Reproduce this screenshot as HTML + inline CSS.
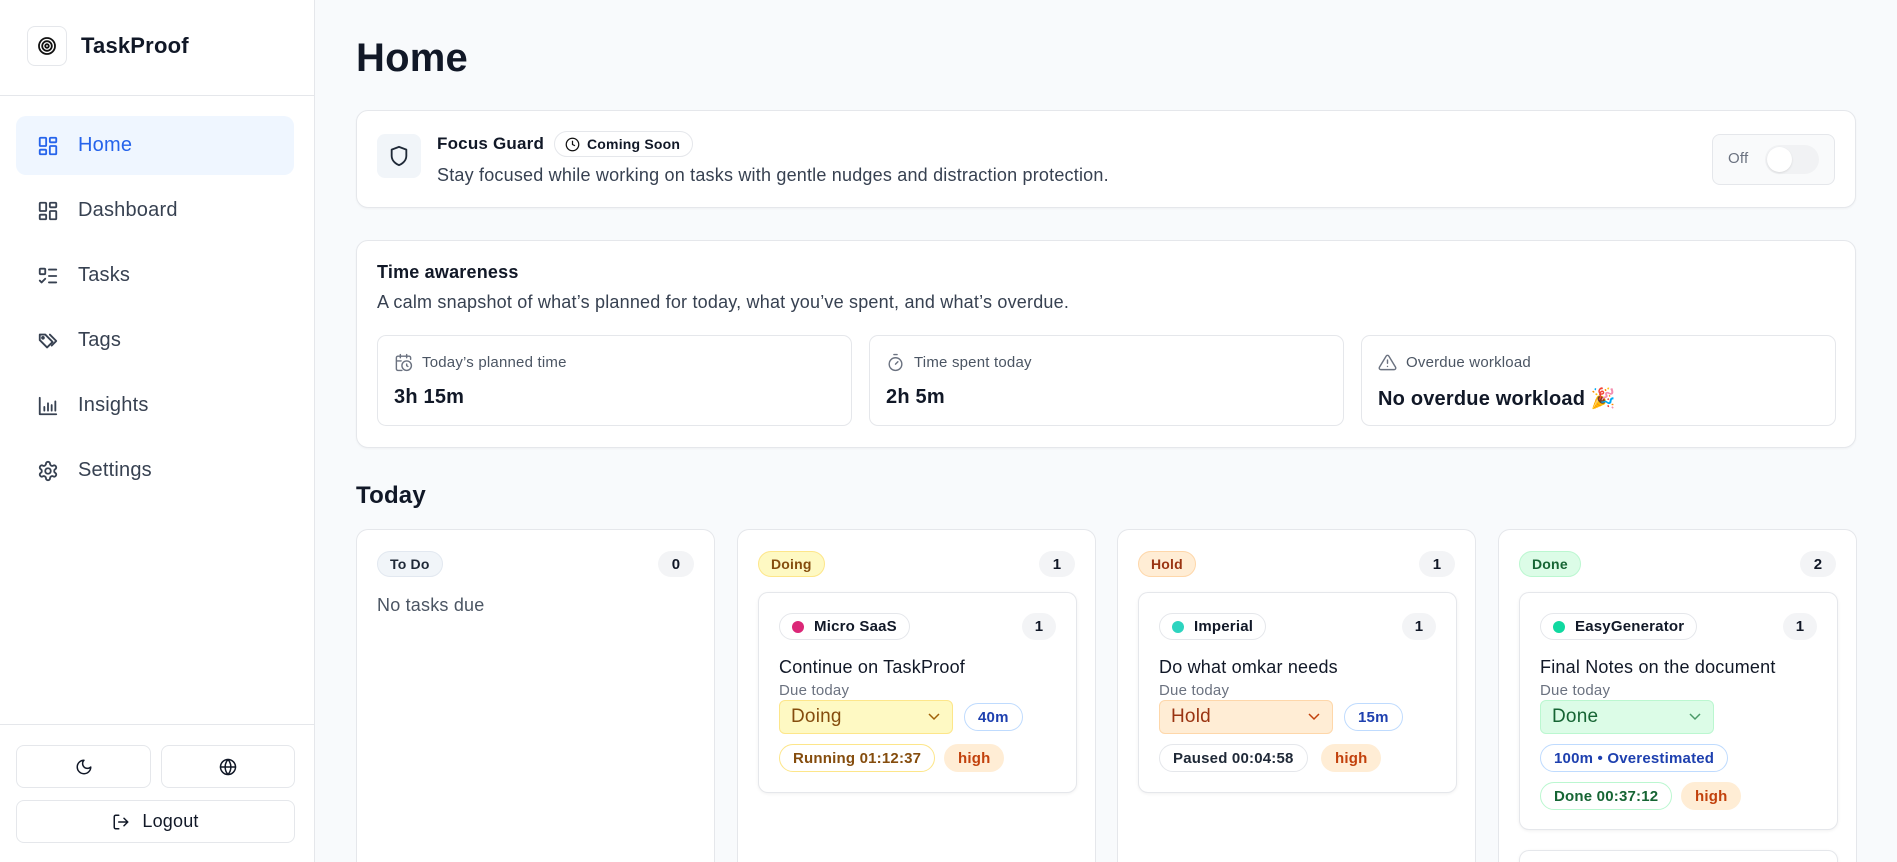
<!DOCTYPE html>
<html style="width:1897px;height:862px;overflow:hidden"><head><meta charset="utf-8"><style>
*{box-sizing:border-box;margin:0;padding:0}
body{width:1897px;height:862px;overflow:hidden;background:#f8fafc;font-family:"Liberation Sans",sans-serif;color:#111827;position:relative;letter-spacing:0.2px}
.a{position:absolute}
.side{left:0;top:0;width:315px;height:862px;background:#fff;border-right:1px solid #e5e7eb}
.nav{left:16px;width:278px;height:59px;display:flex;align-items:center;padding-left:21px;font-size:20px;color:#374151;border-radius:10px}
.nav svg{width:22px;height:22px;margin-right:19px;fill:none;stroke:#374151;stroke-width:2;stroke-linecap:round;stroke-linejoin:round}
.nav.on{background:#eff6ff;color:#2563eb}.nav.on svg{stroke:#2563eb}
.btn{border:1px solid #e5e7eb;border-radius:8px;background:#fff;display:flex;align-items:center;justify-content:center;font-size:18px;color:#111827}
.btn svg{fill:none;stroke:#111827;stroke-width:2;stroke-linecap:round;stroke-linejoin:round}
.card{background:#fff;border:1px solid #e5e7eb;border-radius:12px;box-shadow:0 1px 2px rgba(0,0,0,.04)}
.stat{background:#fff;border:1px solid #e5e7eb;border-radius:9px;width:475px;height:91px;top:335px}
.stat .l{position:absolute;left:16px;top:17px;font-size:15px;color:#4b5563;display:flex;align-items:center}
.stat .l svg{width:19px;height:19px;margin-right:9px;fill:none;stroke:#6b7280;stroke-width:1.8;stroke-linecap:round;stroke-linejoin:round}
.stat .v{position:absolute;left:16px;top:50px;font-size:20px;font-weight:700}
.col{top:529px;width:359px;height:333px;background:#fff;border:1px solid #e5e7eb;border-bottom:none;border-radius:12px 12px 0 0;overflow:hidden}
.badge{position:absolute;left:20px;top:21px;height:26px;padding:0 12px;border-radius:13px;font-size:14px;font-weight:700;display:flex;align-items:center;border:1px solid}
.cnt{position:absolute;right:20px;top:21px;min-width:36px;height:26px;border-radius:13px;background:#f3f4f6;font-size:15px;font-weight:700;display:flex;align-items:center;justify-content:center}
.task{position:absolute;left:20px;top:62px;width:319px;background:#fff;border:1px solid #e5e7eb;border-radius:10px;box-shadow:0 1px 3px rgba(0,0,0,.06)}
.tag{position:absolute;left:20px;top:20px;height:27px;padding:0 12px 0 12px;border:1px solid #e5e7eb;border-radius:14px;font-size:15px;font-weight:700;display:flex;align-items:center}
.tag i{width:12px;height:12px;border-radius:50%;margin-right:10px;display:inline-block}
.tc{position:absolute;right:20px;top:20px;width:34px;height:27px;border-radius:14px;background:#f3f4f6;font-size:15px;font-weight:700;display:flex;align-items:center;justify-content:center}
.tt{position:absolute;left:20px;top:64px;font-size:18px;color:#111827}
.due{position:absolute;left:20px;top:89px;font-size:15px;color:#6b7280}
.sel{position:absolute;left:20px;top:107px;width:174px;height:34px;border-radius:6px;border:1px solid;font-size:19px;padding-left:11px;display:flex;align-items:center}
.sel svg{position:absolute;right:12px;top:12px;width:12px;height:8px;fill:none;stroke-width:1.5}
.pill{position:absolute;height:28px;border-radius:14px;border:1px solid;font-size:15px;font-weight:700;display:flex;align-items:center;padding:0 13px}
.high{background:#ffedd5;border-color:#ffedd5;color:#c2410c}
</style></head><body>
<div class="a side"></div>
<div class="a" style="left:0;top:95px;width:315px;border-top:1px solid #e5e7eb"></div>
<div class="a" style="left:27px;top:26px;width:40px;height:40px;border:1px solid #e5e7eb;border-radius:8px;display:flex;align-items:center;justify-content:center"><svg width="20" height="20" viewBox="0 0 20 20" fill="none" stroke="#111" stroke-width="1.8"><circle cx="10" cy="10" r="8"/><circle cx="10" cy="10" r="4.8"/><circle cx="10" cy="10" r="1.8"/></svg></div>
<div class="a" style="left:81px;top:33px;font-size:22px;font-weight:700;color:#111827">TaskProof</div>

<div class="a nav on" style="top:116px"><svg viewBox="0 0 24 24"><rect x="3" y="3" width="7" height="9" rx="1"/><rect x="14" y="3" width="7" height="5" rx="1"/><rect x="14" y="12" width="7" height="9" rx="1"/><rect x="3" y="16" width="7" height="5" rx="1"/></svg>Home</div>
<div class="a nav" style="top:181px"><svg viewBox="0 0 24 24"><rect x="3" y="3" width="7" height="9" rx="1"/><rect x="14" y="3" width="7" height="5" rx="1"/><rect x="14" y="12" width="7" height="9" rx="1"/><rect x="3" y="16" width="7" height="5" rx="1"/></svg>Dashboard</div>
<div class="a nav" style="top:246px"><svg viewBox="0 0 24 24"><rect x="3" y="4" width="6" height="6" rx="1"/><path d="M3 17l2 2 4-4M13 5h8M13 12h8M13 19h8"/></svg>Tasks</div>
<div class="a nav" style="top:311px"><svg viewBox="0 0 24 24"><path d="M9 5H3v6l8 8 6-6z"/><circle cx="6.5" cy="8.5" r="1"/><path d="M14 5l7 7-5 5"/></svg>Tags</div>
<div class="a nav" style="top:376px"><svg viewBox="0 0 24 24"><path d="M3 3v18h18M8 17v-4M12 17V9M16 17v-6M20 17V7"/></svg>Insights</div>
<div class="a nav" style="top:441px"><svg viewBox="0 0 24 24"><circle cx="12" cy="12" r="3"/><path d="M12.2 2h-.4a2 2 0 0 0-2 2v.2a2 2 0 0 1-1 1.7l-.4.3a2 2 0 0 1-2 0l-.2-.1a2 2 0 0 0-2.7.7l-.2.4a2 2 0 0 0 .7 2.7l.2.1a2 2 0 0 1 1 1.7v.5a2 2 0 0 1-1 1.8l-.2.1a2 2 0 0 0-.7 2.7l.2.4a2 2 0 0 0 2.7.7l.2-.1a2 2 0 0 1 2 0l.4.3a2 2 0 0 1 1 1.7V20a2 2 0 0 0 2 2h.4a2 2 0 0 0 2-2v-.2a2 2 0 0 1 1-1.7l.4-.3a2 2 0 0 1 2 0l.2.1a2 2 0 0 0 2.7-.7l.2-.4a2 2 0 0 0-.7-2.7l-.2-.1a2 2 0 0 1-1-1.8v-.5a2 2 0 0 1 1-1.7l.2-.1a2 2 0 0 0 .7-2.7l-.2-.4a2 2 0 0 0-2.7-.7l-.2.1a2 2 0 0 1-2 0l-.4-.3a2 2 0 0 1-1-1.7V4a2 2 0 0 0-2-2z"/></svg>Settings</div>

<div class="a" style="left:0;top:724px;width:315px;border-top:1px solid #e5e7eb"></div>
<div class="a btn" style="left:16px;top:745px;width:135px;height:43px"><svg width="18" height="18" viewBox="0 0 24 24"><path d="M12 3a6 6 0 0 0 9 9 9 9 0 1 1-9-9z"/></svg></div>
<div class="a btn" style="left:161px;top:745px;width:134px;height:43px"><svg width="18" height="18" viewBox="0 0 24 24"><circle cx="12" cy="12" r="10"/><path d="M2 12h20M12 2a15 15 0 0 1 0 20 15 15 0 0 1 0-20"/></svg></div>
<div class="a btn" style="left:16px;top:800px;width:279px;height:43px"><svg width="18" height="18" viewBox="0 0 24 24" style="margin-right:12px"><path d="M9 21H5a2 2 0 0 1-2-2V5a2 2 0 0 1 2-2h4M16 17l5-5-5-5M21 12H9"/></svg>Logout</div>

<div class="a" style="left:356px;top:36px;font-size:40px;font-weight:700;color:#111827">Home</div>

<div class="a card" style="left:356px;top:110px;width:1500px;height:98px"></div>
<div class="a" style="left:377px;top:134px;width:44px;height:44px;background:#f1f5f9;border-radius:8px;display:flex;align-items:center;justify-content:center"><svg width="22" height="22" viewBox="0 0 24 24" fill="none" stroke="#1f2937" stroke-width="2" stroke-linejoin="round"><path d="M12 22s8-3 8-10V5l-8-3-8 3v7c0 7 8 10 8 10z"/></svg></div>
<div class="a" style="left:437px;top:134px;font-size:17px;font-weight:700">Focus Guard</div>
<div class="a" style="left:554px;top:131px;height:26px;padding:0 12px 0 10px;border:1px solid #e5e7eb;border-radius:13px;font-size:14px;font-weight:700;display:flex;align-items:center"><svg width="15" height="15" viewBox="0 0 24 24" fill="none" stroke="#111" stroke-width="2" style="margin-right:7px"><circle cx="12" cy="12" r="10"/><path d="M12 6v6l4 2"/></svg>Coming Soon</div>
<div class="a" style="left:437px;top:165px;font-size:18px;color:#374151">Stay focused while working on tasks with gentle nudges and distraction protection.</div>
<div class="a" style="left:1712px;top:134px;width:123px;height:51px;border:1px solid #e5e7eb;border-radius:8px;background:#f9fafb"></div>
<div class="a" style="left:1728px;top:150px;font-size:15px;color:#6b7280">Off</div>
<div class="a" style="left:1765px;top:145px;width:54px;height:29px;border-radius:15px;background:#f1f2f4"></div>
<div class="a" style="left:1767px;top:147px;width:25px;height:25px;border-radius:50%;background:#fff;box-shadow:0 1px 2px rgba(0,0,0,.1)"></div>

<div class="a card" style="left:356px;top:240px;width:1500px;height:208px"></div>
<div class="a" style="left:377px;top:262px;font-size:18px;font-weight:700">Time awareness</div>
<div class="a" style="left:377px;top:292px;font-size:18px;color:#374151">A calm snapshot of what’s planned for today, what you’ve spent, and what’s overdue.</div>
<div class="a stat" style="left:377px"><div class="l"><svg viewBox="0 0 24 24"><path d="M21 8V6a2 2 0 0 0-2-2H5a2 2 0 0 0-2 2v14a2 2 0 0 0 2 2h5M16 2v4M8 2v4M3 10h6"/><circle cx="16" cy="16" r="6"/><path d="M16 14v2l1.5 1"/></svg>Today’s planned time</div><div class="v">3h 15m</div></div>
<div class="a stat" style="left:869px"><div class="l"><svg viewBox="0 0 24 24"><path d="M10 2h4M12 14l3-3"/><circle cx="12" cy="14" r="8"/></svg>Time spent today</div><div class="v">2h 5m</div></div>
<div class="a stat" style="left:1361px"><div class="l"><svg viewBox="0 0 24 24"><path d="M10.3 3.9 1.8 18a2 2 0 0 0 1.7 3h17a2 2 0 0 0 1.7-3L13.7 3.9a2 2 0 0 0-3.4 0zM12 9v4M12 17h.01"/></svg>Overdue workload</div><div class="v">No overdue workload 🎉</div></div>

<div class="a" style="left:356px;top:482px;font-size:24px;font-weight:700">Today</div>

<div class="a col" style="left:356px"><div class="badge" style="background:#f1f5f9;border-color:#e2e8f0;color:#1f2937">To Do</div><div class="cnt">0</div><div style="position:absolute;left:20px;top:65px;font-size:18px;color:#4b5563">No tasks due</div></div>

<div class="a col" style="left:737px"><div class="badge" style="background:#fef9c3;border-color:#fde68a;color:#854d0e">Doing</div><div class="cnt">1</div>
<div class="task" style="height:201px"><div class="tag"><i style="background:#db2777"></i>Micro SaaS</div><div class="tc">1</div><div class="tt">Continue on TaskProof</div><div class="due">Due today</div>
<div class="sel" style="background:#fef9c3;border-color:#fde68a;color:#854d0e">Doing<svg viewBox="0 0 12 8" stroke="#a16207"><path d="M1 1l5 5 5-5"/></svg></div>
<div class="pill" style="left:205px;top:110px;border-color:#bfdbfe;color:#1e40af">40m</div>
<div class="pill" style="left:20px;top:151px;border-color:#fde68a;color:#854d0e">Running 01:12:37</div>
<div class="pill high" style="left:185px;top:151px">high</div></div></div>

<div class="a col" style="left:1117px"><div class="badge" style="background:#ffedd5;border-color:#fed7aa;color:#9a3412">Hold</div><div class="cnt">1</div>
<div class="task" style="height:201px"><div class="tag"><i style="background:#2dd4bf"></i>Imperial</div><div class="tc">1</div><div class="tt">Do what omkar needs</div><div class="due">Due today</div>
<div class="sel" style="background:#ffedd5;border-color:#fed7aa;color:#9a3412">Hold<svg viewBox="0 0 12 8" stroke="#c2410c"><path d="M1 1l5 5 5-5"/></svg></div>
<div class="pill" style="left:205px;top:110px;border-color:#bfdbfe;color:#1e40af">15m</div>
<div class="pill" style="left:20px;top:151px;border-color:#e5e7eb;color:#1f2937">Paused 00:04:58</div>
<div class="pill high" style="left:182px;top:151px">high</div></div></div>

<div class="a col" style="left:1498px"><div class="badge" style="background:#dcfce7;border-color:#bbf7d0;color:#166534">Done</div><div class="cnt">2</div>
<div class="task" style="height:238px"><div class="tag"><i style="background:#10d9a0"></i>EasyGenerator</div><div class="tc">1</div><div class="tt">Final Notes on the document</div><div class="due">Due today</div>
<div class="sel" style="background:#dcfce7;border-color:#bbf7d0;color:#166534">Done<svg viewBox="0 0 12 8" stroke="#4b9a68"><path d="M1 1l5 5 5-5"/></svg></div>
<div class="pill" style="left:20px;top:151px;border-color:#bfdbfe;color:#1e40af">100m • Overestimated</div>
<div class="pill" style="left:20px;top:189px;border-color:#bbf7d0;color:#166534">Done 00:37:12</div>
<div class="pill high" style="left:161px;top:189px">high</div></div>
<div class="task" style="top:320px;height:100px"></div></div>
</body></html>
